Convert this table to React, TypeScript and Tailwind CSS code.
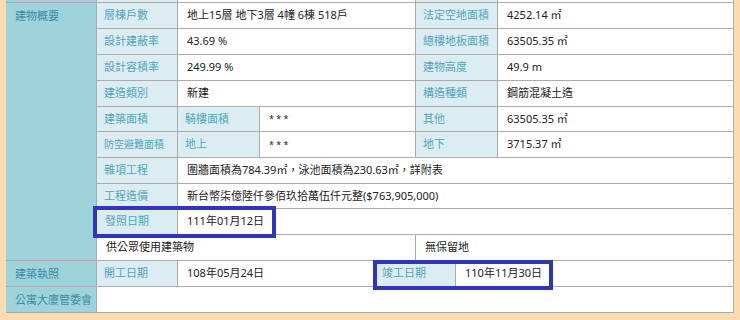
import React from 'react';

type CellProps = {
  children?: React.ReactNode;
  className?: string;
};

const Head: React.FC<CellProps> = ({ children, className = '' }) => (
  <div className={`bg-[#9fd3dc] text-[#3c8ca2] pl-[9px] leading-[25px] ${className}`}>{children}</div>
);

const Label: React.FC<CellProps> = ({ children, className = '' }) => (
  <div className={`bg-[#dbedf2] text-[#56a3b9] pl-[7px] flex items-center whitespace-nowrap ${className}`}>{children}</div>
);

const Value: React.FC<CellProps> = ({ children, className = '' }) => (
  <div className={`bg-white text-[#222222] pl-[9px] flex items-center whitespace-nowrap ${className}`}>{children}</div>
);

export default function App() {
  return (
    <div className="relative w-[740px] h-[320px] overflow-hidden bg-[#f9dcb0] pl-[6px] text-[11px] font-['Noto_Sans','Noto_Sans_CJK_TC',sans-serif]">
      <div className="grid w-[728px] grid-cols-[90px_80px_81px_155px_81px_235px] grid-rows-[2px_25px_25px_25px_25px_24px_25px_25px_24px_25px_25px_25px_25px] gap-px bg-[#ababab] pr-px pb-px">
        {/* tail of the previous row */}
        <div className="bg-[#9fd3dc]" />
        <div className="bg-[#dbedf2]" />
        <div className="bg-white col-span-2" />
        <div className="bg-[#dbedf2]" />
        <div className="bg-white" />

        <Head className="row-span-10">建物概要</Head>

        <Label>層棟戶數</Label>
        <Value className="col-span-2">地上15層 地下3層 4幢 6棟 518戶</Value>
        <Label>法定空地面積</Label>
        <Value>4252.14 ㎡</Value>

        <Label>設計建蔽率</Label>
        <Value className="col-span-2">43.69 %</Value>
        <Label>總樓地板面積</Label>
        <Value>63505.35 ㎡</Value>

        <Label>設計容積率</Label>
        <Value className="col-span-2">249.99 %</Value>
        <Label>建物高度</Label>
        <Value>49.9 m</Value>

        <Label>建造類別</Label>
        <Value className="col-span-2">新建</Value>
        <Label>構造種類</Label>
        <Value>鋼筋混凝土造</Value>

        <Label>建築面積</Label>
        <Label>騎樓面積</Label>
        <Value className="pl-[8px] text-[9px]">* * *</Value>
        <Label>其他</Label>
        <Value>63505.35 ㎡</Value>

        <Label className="text-[10px]">防空避難面積</Label>
        <Label>地上</Label>
        <Value className="pl-[8px] text-[9px]">* * *</Value>
        <Label>地下</Label>
        <Value>3715.37 ㎡</Value>

        <Label>雜項工程</Label>
        <Value className="col-span-4">圍牆面積為784.39㎡，泳池面積為230.63㎡，詳附表</Value>

        <Label>工程造價</Label>
        <Value className="col-span-4">新台幣柒億陸仟參佰玖拾萬伍仟元整($763,905,000)</Value>

        <Label className="pl-[8px]">發照日期</Label>
        <Value className="col-span-4">111年01月12日</Value>

        <Value className="col-span-3 pl-[8px]">供公眾使用建築物</Value>
        <Value className="col-span-2 pl-[7px]">無保留地</Value>

        <Head>建築執照</Head>
        <div className="col-span-5 grid grid-cols-[80px_196px_80px_1fr] gap-px bg-[#ababab]">
          <Label className="pl-[4px]">開工日期</Label>
          <Value>108年05月24日</Value>
          <Label>竣工日期</Label>
          <Value className="pl-[3px]">110年11月30日</Value>
        </div>

        <Head>公寓大廈管委會</Head>
        <div className="col-span-5 bg-white" />
      </div>

      {/* highlight annotations */}
      <div className="absolute left-[93px] top-[206px] w-[183px] h-[32px] border-4 border-[#3036b4]" />
      <div className="absolute left-[373px] top-[260px] w-[180px] h-[30px] border-4 border-[#3036b4]" />
    </div>
  );
}
